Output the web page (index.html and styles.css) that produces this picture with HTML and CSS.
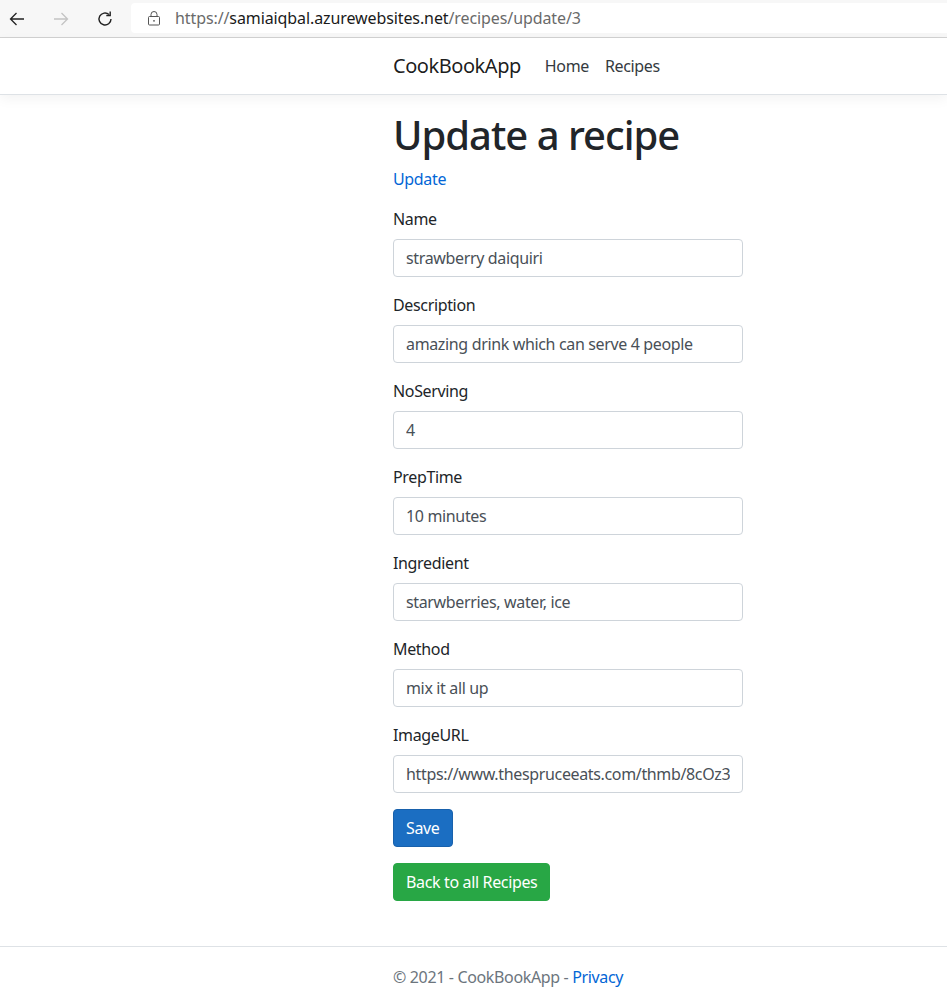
FILE: index.html
```html
<!DOCTYPE html>
<html lang="en">
<head>
<meta charset="utf-8">
<title>Update a recipe - CookBookApp</title>
<link rel="stylesheet" href="styles.css">
</head>
<body>
<div class="browser">
  <div class="nav-btns">
    <svg class="bicon" viewBox="0 0 20 20" width="20" height="20"><path d="M17 10H3.5M9.5 4L3.5 10l6 6" fill="none" stroke="#222" stroke-width="1.3"/></svg>
    <svg class="bicon" viewBox="0 0 20 20" width="20" height="20"><path d="M3 10h13.5M10.5 4l6 6-6 6" fill="none" stroke="#c4c4c4" stroke-width="1.3"/></svg>
    <svg class="bicon" viewBox="0 0 20 20" width="20" height="20"><path d="M16 10a6 6 0 1 1-2-4.5" fill="none" stroke="#222" stroke-width="1.4"/><path d="M15.2 2.6v3.9h-3.9" fill="none" stroke="#222" stroke-width="1.4"/></svg>
  </div>
  <div class="address">
    <svg class="lock" viewBox="0 0 14 16" width="14" height="16"><rect x="1.5" y="6.5" width="11" height="8.5" rx="1" fill="none" stroke="#555" stroke-width="1"/><path d="M4 6.5V4.5a3 3 0 0 1 6 0v2" fill="none" stroke="#555" stroke-width="1"/><circle cx="7" cy="10.8" r="0.9" fill="#555"/></svg>
    <span class="url"><span class="dim">https://</span>samiaiqbal.azurewebsites.net<span class="dim">/recipes/update/3</span></span>
  </div>
</div>

<header class="navbar">
  <div class="container nav-inner">
    <a class="brand" href="#">CookBookApp</a>
    <nav class="nav-links">
      <a class="nav-link" href="#">Home</a>
      <a class="nav-link" href="#">Recipes</a>
    </nav>
  </div>
</header>

<main class="container main">
  <h1 class="title">Update a recipe</h1>
  <a class="sub-link" href="#">Update</a>
  <form class="form">
    <div class="form-group">
      <label class="label">Name</label>
      <input class="input" type="text" value="strawberry daiquiri">
    </div>
    <div class="form-group">
      <label class="label">Description</label>
      <input class="input" type="text" value="amazing drink which can serve 4 people">
    </div>
    <div class="form-group">
      <label class="label">NoServing</label>
      <input class="input" type="text" value="4">
    </div>
    <div class="form-group">
      <label class="label">PrepTime</label>
      <input class="input" type="text" value="10 minutes">
    </div>
    <div class="form-group">
      <label class="label">Ingredient</label>
      <input class="input" type="text" value="starwberries, water, ice">
    </div>
    <div class="form-group">
      <label class="label">Method</label>
      <input class="input" type="text" value="mix it all up">
    </div>
    <div class="form-group">
      <label class="label">ImageURL</label>
      <input class="input" type="text" value="https://www.thespruceeats.com/thmb/8cOz3_jFq2x">
    </div>
    <button class="btn btn-primary" type="button">Save</button>
  </form>
  <div class="back-row">
    <a class="btn btn-success" href="#">Back to all Recipes</a>
  </div>
</main>

<footer class="footer">
  <div class="container">&copy; 2021 - CookBookApp - <a class="footer-link" href="#">Privacy</a></div>
</footer>
</body>
</html>
```
FILE: styles.css
```css
* { box-sizing: border-box; }
html, body { margin: 0; padding: 0; }
body {
  font-family: "Noto Sans", "Open Sans", sans-serif;
  font-size: 16px;
  line-height: 1.5;
  letter-spacing: -0.35px;
  color: #212529;
  background: #fff;
}
a { text-decoration: none; }

.browser {
  height: 38px;
  background: #f7f7f7;
  border-bottom: 1px solid #d2d2d2;
  display: flex;
  align-items: center;
  letter-spacing: 0;
}
.nav-btns {
  display: flex;
  align-items: center;
  gap: 24px;
  padding-left: 7px;
  width: 131px;
}
.bicon { display: block; }
.address {
  flex: 1;
  height: 30px;
  margin-top: -1px;
  background: #fff;
  border-radius: 4px 0 0 4px;
  display: flex;
  align-items: center;
  padding-left: 16px;
  gap: 14px;
}
.lock { display: block; }
.url {
  font-size: 16px;
  color: #1a1a1a;
  letter-spacing: -0.1px;
}
.url .dim { color: #6a6a6a; }

.container {
  width: 100%;
  padding-left: 393px;
  padding-right: 15px;
}

.navbar {
  height: 57px;
  background: #fff;
  border-bottom: 1px solid #dee2e6;
  box-shadow: 0 4px 12px rgba(0,0,0,0.05);
  margin-bottom: 16px;
}
.nav-inner {
  height: 56px;
  display: flex;
  align-items: center;
}
.brand {
  font-size: 20px;
  color: rgba(0,0,0,0.9);
  margin-right: 16px;
  line-height: 30px;
  letter-spacing: -0.45px;
}
.nav-links { display: flex; }
.nav-link {
  color: #343a40;
  padding: 8px 8px;
}

.main { padding-bottom: 45px; }
.title {
  font-size: 40px;
  font-weight: 500;
  line-height: 1.2;
  margin: 0 0 8px;
  letter-spacing: -1px;
}
.sub-link {
  display: block;
  color: #0366d6;
  margin-bottom: 16px;
}
.form { width: 350px; margin: 0 0 16px; }
.form-group { margin-bottom: 16px; }
.label {
  display: block;
  margin-bottom: 8px;
}
.input {
  display: block;
  width: 100%;
  height: 38px;
  padding: 6px 12px;
  font-family: inherit;
  font-size: 16px;
  line-height: 1.5;
  letter-spacing: -0.35px;
  color: #495057;
  background: #fff;
  border: 1px solid #ced4da;
  border-radius: 4px;
}
.btn {
  display: inline-block;
  height: 38px;
  padding: 6px 12px;
  font-family: inherit;
  font-size: 16px;
  line-height: 1.5;
  letter-spacing: -0.35px;
  border: 1px solid transparent;
  border-radius: 4px;
  color: #fff;
  cursor: pointer;
}
.btn-primary { background: #1b6ec2; border-color: #1861ac; }
.btn-success { background: #28a745; border-color: #28a745; }

.footer {
  border-top: 1px solid #dee2e6;
  line-height: 60px;
  color: #6c757d;
  white-space: nowrap;
}
.footer-link { color: #0366d6; }
```
